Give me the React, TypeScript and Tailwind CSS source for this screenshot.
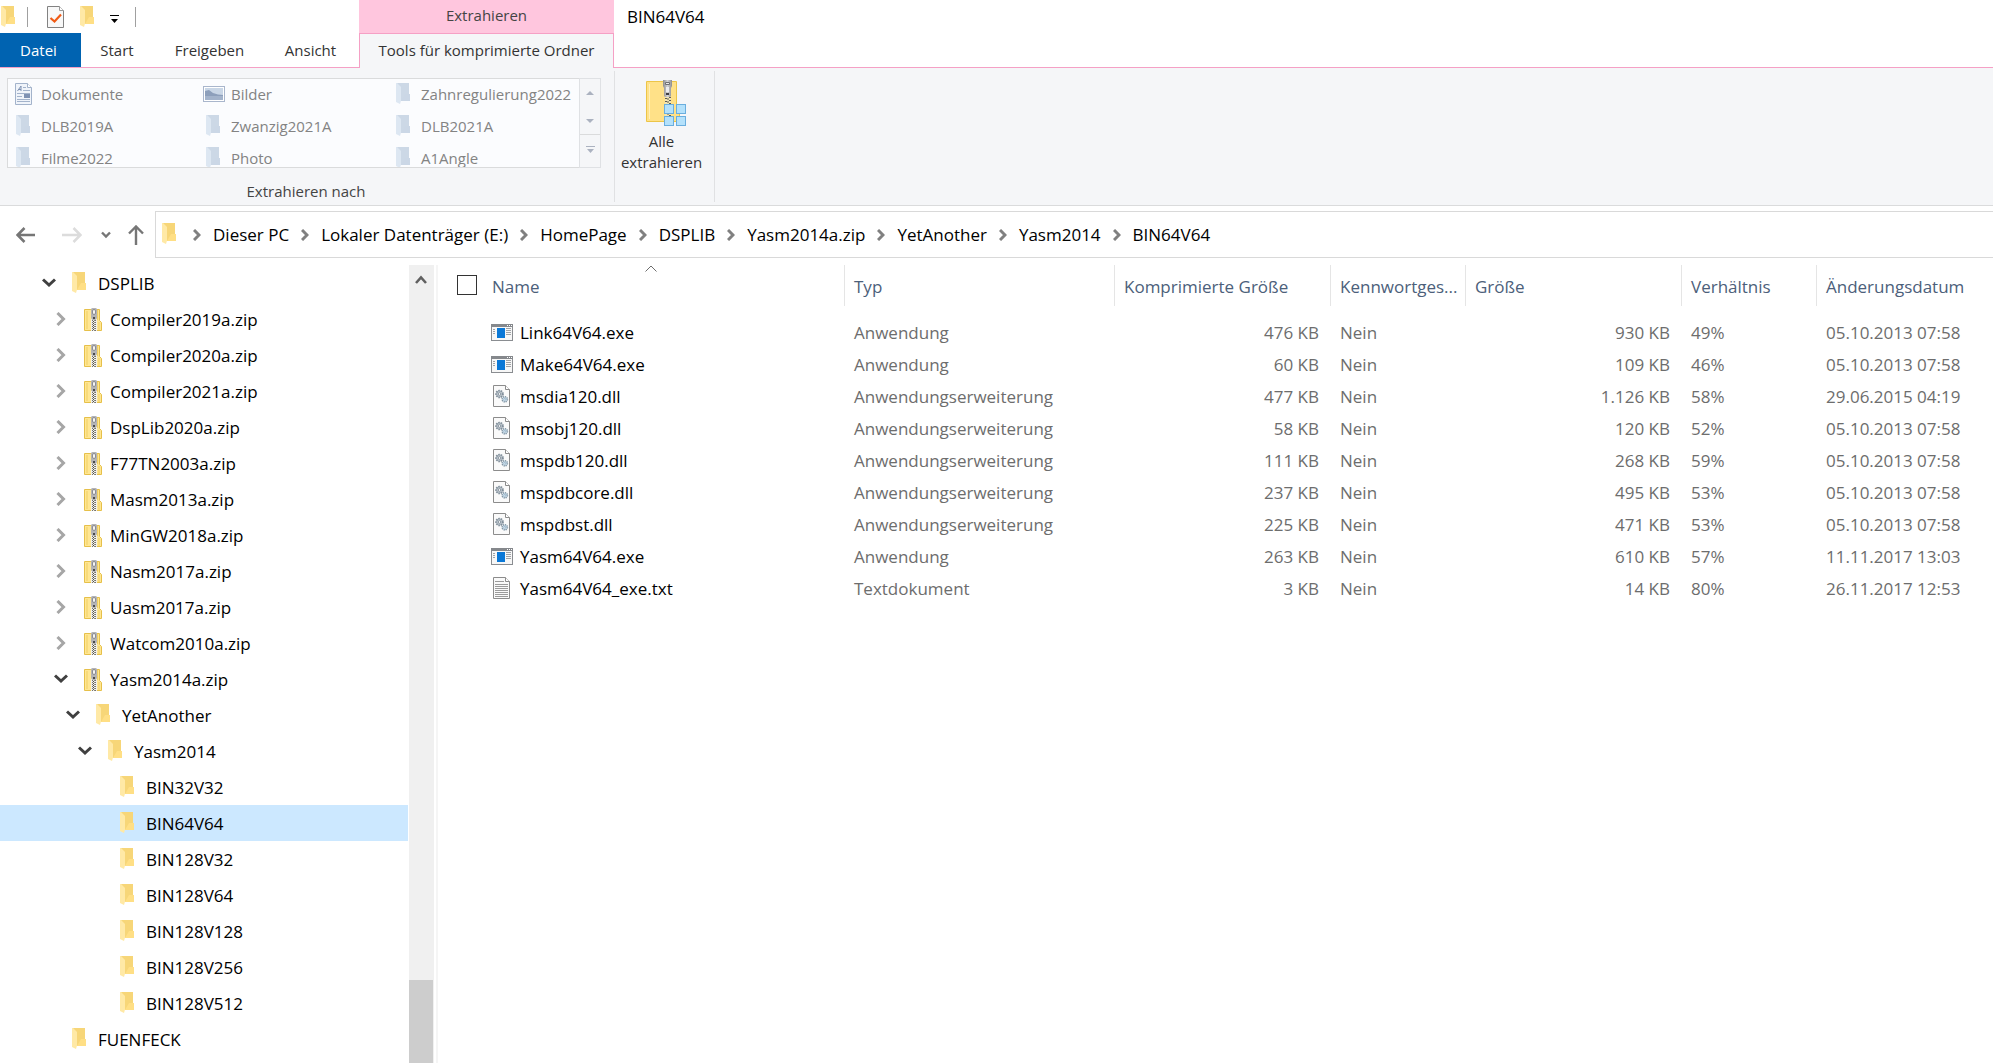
import React from "react";

type IconProps = { muted?: boolean };

function FolderIcon({ muted = false }: IconProps) {
  const back = muted ? "#ccd8e6" : "#f7d678";
  const foot = muted ? "#cbd7e6" : "#ffdf85";
  const flap = muted ? "#dde7f2" : "#ffe9a6";
  return (
    <svg width="15" height="22" viewBox="0 0 15 22" className="shrink-0" aria-hidden="true">
      <path d="M1 0h12v11h1v7H4z" fill={back} />
      <path d="M9 11h5v7H5z" fill={foot} />
      <path d="M0 0h1l4 4v13.500l-1 3.500L0 19z" fill={flap} />
    </svg>
  );
}

function ZipIcon() {
  return (
    <svg width="18" height="23" viewBox="0 0 18 23" className="shrink-0" aria-hidden="true">
      <path d="M0.500 1.500h15v11l2 2v8h-17z" fill="#ffe692" stroke="#e6c04a" />
      <path d="M3 3v18M13.500 2v10M15 14v8" stroke="#f1cf62" />
      <path d="M7 11h6v12H7z" fill="#efeee9" />
      <path d="M8.500 12v11M11.500 12v11" stroke="#77756d" strokeDasharray="1 1" />
      <path d="M9.500 13v10" stroke="#4f4e4a" strokeDasharray="1 1" />
      <path d="M10.500 12v11" stroke="#8a887f" strokeDasharray="1 1" />
      <path d="M8 0h4l1 1v9l-1.500 2h-3L7 10V1z" fill="#b4b4b6" />
      <rect x="8.500" y="1.500" width="3" height="5" rx="1.500" fill="#f4f4f4" stroke="#858588" strokeWidth="0.900" />
      <path d="M9 9h2v2H9z" fill="#4a4a4c" />
    </svg>
  );
}

function BigZipIcon() {
  return (
    <svg width="40" height="46" viewBox="0 0 40 46" aria-hidden="true">
      <defs>
        <linearGradient id="pull" x1="0" x2="1" y1="0" y2="0">
          <stop offset="0" stopColor="#8c8c8e" />
          <stop offset="0.500" stopColor="#d2d2d4" />
          <stop offset="1" stopColor="#8c8c8e" />
        </linearGradient>
      </defs>
      <path d="M0.500 1.500h30v24l3 2v14H0.500z" fill="#ffe188" stroke="#ecc548" />
      <path d="M3.500 4v35" stroke="#fff0b8" />
      <path d="M19 17h6v25h-6z" fill="#f3e6b4" />
      <path d="M20 18v24M24 17v25" stroke="#5d5b54" strokeWidth="2" strokeDasharray="1 2" />
      <path d="M22 17v25" stroke="#5d5b54" strokeWidth="2" strokeDasharray="1 2" strokeDashoffset="1.500" />
      <path d="M17 0h9v6l-1 2v8l-1 1h-5l-1-1V8l-1-2z" fill="url(#pull)" />
      <path d="M19.500 2.500h4v2h-4z" fill="#e8e8ea" stroke="#6f6f72" />
      <path d="M20 7h3v5h-3z" fill="#ececee" />
      <rect x="20" y="13" width="3" height="2" fill="#3f3f41" />
      <g fill="#b4e1fb" stroke="#6aaede">
        <rect x="18.500" y="24.500" width="9" height="9" />
        <rect x="30.500" y="24.500" width="9" height="9" />
        <rect x="18.500" y="36.500" width="9" height="9" />
        <rect x="30.500" y="36.500" width="9" height="9" />
      </g>
    </svg>
  );
}

function CheckedPageIcon() {
  return (
    <svg width="17" height="22" viewBox="0 0 17 22" aria-hidden="true">
      <path d="M0.500 0.500h12l4 4v17H0.500z" fill="#f8f8f8" stroke="#828282" />
      <path d="M12.500 0.500v4h4" fill="#fff" stroke="#9a9a9a" />
      <path d="M3.500 12l4 3.500L14 8.500" fill="none" stroke="#f05a14" strokeWidth="2.200" />
    </svg>
  );
}

function DocumentsIcon() {
  return (
    <svg width="17" height="22" viewBox="0 0 17 22" className="shrink-0" aria-hidden="true">
      <path d="M0.500 0.500h12l4 4v17H0.500z" fill="#f0f4fa" stroke="#a3b3cb" />
      <path d="M12.500 0.500v4h4" fill="#fff" stroke="#a3b3cb" />
      <path d="M2.500 8L6 3v5M3.500 6.500H6" fill="none" stroke="#7f92b3" />
      <path d="M8 4.500h3M8 7.500h7M2 10.500h13M2 13.500h5M2 16.500h13M2 18.500h13" stroke="#a3b3cb" />
      <rect x="9" y="11" width="6" height="4" fill="#7f92b3" />
    </svg>
  );
}

function PicturesIcon() {
  return (
    <svg width="22" height="16" viewBox="0 0 22 16" className="shrink-0" aria-hidden="true">
      <rect x="0.500" y="0.500" width="21" height="15" fill="#fff" stroke="#a9b6cc" />
      <rect x="2" y="2" width="18" height="12" fill="#c9d6e6" />
      <path d="M2 5l4-1 4 3 5 1.500 5 .5v1H2z" fill="#8d9fbb" />
      <path d="M2 10h18v4H2z" fill="#a3b3cb" />
    </svg>
  );
}

function ExeIcon() {
  return (
    <svg width="22" height="17" viewBox="0 0 22 17" className="shrink-0" aria-hidden="true">
      <rect x="0.500" y="0.500" width="21" height="16" fill="#f7f7f7" stroke="#8a8d91" />
      <path d="M0 0h22v3H0z" fill="#85888c" />
      <path d="M16 1.500h1M18 1.500h1M20 1.500h1" stroke="#fff" />
      <rect x="6" y="4" width="8" height="10" fill="#0a78d7" />
      <path d="M2 5.500h2M2 7.500h2M2 9.500h2M15 4.500h5M15 6.500h5M15 8.500h5M15 10.500h5" stroke="#a0a3a6" />
    </svg>
  );
}

function DllIcon() {
  return (
    <svg width="17" height="22" viewBox="0 0 17 22" className="shrink-0" aria-hidden="true">
      <path d="M0.500 0.500h12l4 4v17H0.500z" fill="#fafafa" stroke="#8c8c8c" />
      <path d="M12.500 0.500v4h4" fill="#fff" stroke="#8c8c8c" />
      <circle cx="6.500" cy="9" r="3.400" fill="#c0c8cf" stroke="#7f8d99" strokeWidth="1.900" strokeDasharray="1.500 0.900" />
      <circle cx="6.500" cy="9" r="1.300" fill="#fff" stroke="#7f8d99" strokeWidth="0.900" />
      <circle cx="11.800" cy="14.300" r="2.600" fill="#d0e2ee" stroke="#8296a5" strokeWidth="1.600" strokeDasharray="1.200 0.800" />
      <circle cx="11.800" cy="14.300" r="0.900" fill="#fff" stroke="#7fa3bd" strokeWidth="0.700" />
    </svg>
  );
}

function TextIcon() {
  return (
    <svg width="17" height="22" viewBox="0 0 17 22" className="shrink-0" aria-hidden="true">
      <path d="M0.500 0.500h12l4 4v17H0.500z" fill="#fafafa" stroke="#8c8c8c" />
      <path d="M12.500 0.500v4h4" fill="#fff" stroke="#8c8c8c" />
      <path d="M2 4.500h9M2 7.500h13M2 9.500h13M2 11.500h13M2 13.500h13M2 15.500h13M2 17.500h13M2 19.500h13" stroke="#9b9b9b" />
    </svg>
  );
}

function Chevron({ open }: { open: boolean }) {
  return open ? (
    <svg width="14" height="10" viewBox="0 0 14 10" aria-hidden="true">
      <path d="M1 1.500l6 5.500 6-5.500" fill="none" stroke="#404040" strokeWidth="3" />
    </svg>
  ) : (
    <svg width="10" height="14" viewBox="0 0 10 14" aria-hidden="true">
      <path d="M1.500 1l6 6-6 6" fill="none" stroke="#a6a6a6" strokeWidth="3" />
    </svg>
  );
}

type Node = { label: string; level: number; zip?: boolean; open?: boolean };

const tree: Node[] = [
  { label: "DSPLIB", level: 0, open: true },
  { label: "Compiler2019a.zip", level: 1, zip: true, open: false },
  { label: "Compiler2020a.zip", level: 1, zip: true, open: false },
  { label: "Compiler2021a.zip", level: 1, zip: true, open: false },
  { label: "DspLib2020a.zip", level: 1, zip: true, open: false },
  { label: "F77TN2003a.zip", level: 1, zip: true, open: false },
  { label: "Masm2013a.zip", level: 1, zip: true, open: false },
  { label: "MinGW2018a.zip", level: 1, zip: true, open: false },
  { label: "Nasm2017a.zip", level: 1, zip: true, open: false },
  { label: "Uasm2017a.zip", level: 1, zip: true, open: false },
  { label: "Watcom2010a.zip", level: 1, zip: true, open: false },
  { label: "Yasm2014a.zip", level: 1, zip: true, open: true },
  { label: "YetAnother", level: 2, open: true },
  { label: "Yasm2014", level: 3, open: true },
  { label: "BIN32V32", level: 4 },
  { label: "BIN64V64", level: 4 },
  { label: "BIN128V32", level: 4 },
  { label: "BIN128V64", level: 4 },
  { label: "BIN128V128", level: 4 },
  { label: "BIN128V256", level: 4 },
  { label: "BIN128V512", level: 4 },
  { label: "FUENFECK", level: 0 },
];

const indents = ["pl-[39px]", "pl-[51px]", "pl-[63px]", "pl-[75px]", "pl-[87px]"];

const files = [
  ["Link64V64.exe", "Anwendung", "476 KB", "930 KB", "49%", "05.10.2013 07:58"],
  ["Make64V64.exe", "Anwendung", "60 KB", "109 KB", "46%", "05.10.2013 07:58"],
  ["msdia120.dll", "Anwendungserweiterung", "477 KB", "1.126 KB", "58%", "29.06.2015 04:19"],
  ["msobj120.dll", "Anwendungserweiterung", "58 KB", "120 KB", "52%", "05.10.2013 07:58"],
  ["mspdb120.dll", "Anwendungserweiterung", "111 KB", "268 KB", "59%", "05.10.2013 07:58"],
  ["mspdbcore.dll", "Anwendungserweiterung", "237 KB", "495 KB", "53%", "05.10.2013 07:58"],
  ["mspdbst.dll", "Anwendungserweiterung", "225 KB", "471 KB", "53%", "05.10.2013 07:58"],
  ["Yasm64V64.exe", "Anwendung", "263 KB", "610 KB", "57%", "11.11.2017 13:03"],
  ["Yasm64V64_exe.txt", "Textdokument", "3 KB", "14 KB", "80%", "26.11.2017 12:53"],
];

const crumbs = [
  "Dieser PC",
  "Lokaler Datenträger (E:)",
  "HomePage",
  "DSPLIB",
  "Yasm2014a.zip",
  "YetAnother",
  "Yasm2014",
  "BIN64V64",
];

const targets = [
  "Dokumente",
  "Bilder",
  "Zahnregulierung2022",
  "DLB2019A",
  "Zwanzig2021A",
  "DLB2021A",
  "Filme2022",
  "Photo",
  "A1Angle",
];

const headings = ["Typ", "Komprimierte Größe", "Kennwortges...", "Größe", "Verhältnis", "Änderungsdatum"];

function fileIcon(name: string) {
  if (name.endsWith(".exe")) return <ExeIcon />;
  if (name.endsWith(".dll")) return <DllIcon />;
  return <TextIcon />;
}

function targetIcon(name: string) {
  if (name === "Dokumente") return <DocumentsIcon />;
  if (name === "Bilder") return <PicturesIcon />;
  return <FolderIcon muted />;
}

function TopBar() {
  return (
    <header className="flex text-[15px] text-[#333]">
      <div className="w-[359px] shrink-0">
        <div className="flex h-[33px] items-center pl-px">
          <FolderIcon />
          <span className="ml-[11px] h-5 w-px bg-[#a0a0a0]" />
          <button type="button" aria-label="Eigenschaften" className="ml-[19px]">
            <CheckedPageIcon />
          </button>
          <button type="button" aria-label="Neuer Ordner" className="ml-4">
            <FolderIcon />
          </button>
          <button type="button" aria-label="Symbolleiste anpassen" className="ml-[15px] pt-1">
            <svg width="9" height="8" viewBox="0 0 9 8" aria-hidden="true">
              <path d="M0 .5h9" stroke="#000" />
              <path d="M1 4h7L4.500 8z" fill="#000" />
            </svg>
          </button>
          <span className="ml-4 h-5 w-px bg-[#a0a0a0]" />
        </div>
        <nav className="flex h-[35px] border-b border-[#f5a0c5]">
          <button type="button" className="w-[81px] bg-[#0063b1] pr-1 text-white">Datei</button>
          <button type="button" className="w-[72px]">Start</button>
          <button type="button" className="w-[113px]">Freigeben</button>
          <button type="button" className="w-[89px]">Ansicht</button>
        </nav>
      </div>
      <div className="flex w-[255px] shrink-0 flex-col">
        <div className="flex h-[33px] items-center justify-center bg-[#ffc6de] pb-[3px] text-[#444]">Extrahieren</div>
        <button type="button" className="h-[35px] whitespace-nowrap border-x border-t border-[#f5a0c5] bg-[#f5f6f8] pb-0.5">
          Tools für komprimierte Ordner
        </button>
      </div>
      <div className="min-w-0 flex-1 border-b border-[#f5a0c5] pl-[13px]">
        <h1 className="flex h-[33px] items-center text-[17px] text-black">BIN64V64</h1>
      </div>
    </header>
  );
}

function Ribbon() {
  return (
    <section className="flex h-[138px] border-b border-[#dadbdc] bg-[#f5f6f8] text-[15px] text-[#333]">
      <div className="flex w-[614px] shrink-0 flex-col items-center pl-[7px] pr-[13px] pt-[10px]">
        <div className="flex h-[90px] w-full">
          <div className="grid flex-1 auto-rows-[32px] grid-cols-[190px_190px_1fr] overflow-hidden border-y border-l border-[#dadbdc] bg-[#fbfcfe]">
            {targets.map((t) => (
              <button key={t} type="button" disabled className="flex items-center whitespace-nowrap pb-0.5 pl-1 text-[#838383]">
                <span className="mr-[6px] flex w-[23px] justify-center">{targetIcon(t)}</span>
                {t}
              </button>
            ))}
          </div>
          <div className="flex w-[22px] flex-col border border-[#dfe1e4] text-[#abb2c0]">
            <button type="button" disabled aria-label="Nach oben" className="flex flex-1 items-center justify-center">
              <svg width="8" height="4" viewBox="0 0 8 4"><path d="M0 4h8L4 0z" fill="currentColor" /></svg>
            </button>
            <button type="button" disabled aria-label="Nach unten" className="flex flex-1 items-center justify-center">
              <svg width="8" height="4" viewBox="0 0 8 4"><path d="M0 0h8L4 4z" fill="currentColor" /></svg>
            </button>
            <button type="button" disabled aria-label="Mehr" className="flex flex-1 items-center justify-center border-t border-[#dadbdc] pb-1">
              <svg width="9" height="7" viewBox="0 0 9 7"><path d="M0 0h9v1H0zM1 3h7L4.500 7z" fill="currentColor" /></svg>
            </button>
          </div>
        </div>
        <div className="ml-1 mt-[11px] text-[#444]">Extrahieren nach</div>
      </div>
      <div className="my-[3px] w-[101px] shrink-0 border-x border-[#e0e1e3]">
        <button type="button" className="flex w-full flex-col items-center pr-[6px] pt-[9px] leading-[21px]">
          <span className="mb-[5px] ml-2"><BigZipIcon /></span>
          Alle
          <br />
          extrahieren
        </button>
      </div>
    </section>
  );
}

function AddressRow() {
  return (
    <div className="flex items-center pb-[7px] pl-4 pt-[5px]">
      <button type="button" aria-label="Zurück">
        <svg width="20" height="16" viewBox="0 0 20 16"><path d="M19 8H2M8.500 1L1.500 8l7 7" fill="none" stroke="#767676" strokeWidth="2.600" /></svg>
      </button>
      <button type="button" aria-label="Vorwärts" className="ml-[26px]">
        <svg width="20" height="16" viewBox="0 0 20 16"><path d="M0 8h18M11.500 1l7 7-7 7" fill="none" stroke="#dcdcdc" strokeWidth="2.600" /></svg>
      </button>
      <button type="button" aria-label="Zuletzt besucht" className="ml-[19px]">
        <svg width="10" height="8" viewBox="0 0 10 8"><path d="M1 1.500l4 4 4-4" fill="none" stroke="#767676" strokeWidth="2.400" /></svg>
      </button>
      <button type="button" aria-label="Nach oben" className="ml-[17px]">
        <svg width="16" height="20" viewBox="0 0 16 20"><path d="M8 20V2M1 8.500l7-7 7 7" fill="none" stroke="#767676" strokeWidth="2.400" /></svg>
      </button>
      <nav aria-label="Pfad" className="ml-[11px] flex h-[47px] min-w-0 flex-1 items-center border-y border-l border-[#d9d9d9] pl-[6px]">
        <span className="mr-1 pb-0.5"><FolderIcon /></span>
        {crumbs.map((c) => (
          <React.Fragment key={c}>
            <span className="mx-3 shrink-0">
              <svg width="8" height="12" viewBox="0 0 8 12"><path d="M1 1l5 5-5 5" fill="none" stroke="#808080" strokeWidth="3" /></svg>
            </span>
            <a href="#" className="whitespace-nowrap">{c}</a>
          </React.Fragment>
        ))}
      </nav>
    </div>
  );
}

function Sidebar() {
  return (
    <aside className="flex w-[438px] shrink-0 border-r-2 border-[#f5f5f5]">
      <ul className="w-[408px]">
        {tree.map((n) => (
          <li
            key={n.label}
            className={`flex h-9 items-center ${indents[n.level]} ${n.label === "BIN64V64" ? "bg-[#cce8ff]" : ""}`}
          >
            {n.open === undefined ? (
              <span className="w-[20px]" />
            ) : (
              <button type="button" aria-label={`${n.label} ${n.open ? "zuklappen" : "aufklappen"}`} className="flex w-[20px] justify-center">
                <Chevron open={n.open} />
              </button>
            )}
            <span className="ml-[13px] flex w-[26px]">{n.zip ? <ZipIcon /> : <FolderIcon />}</span>
            <a href="#" className="pt-0.5">{n.label}</a>
          </li>
        ))}
      </ul>
      <div className="ml-px flex w-[25px] flex-col items-start bg-[#f0f0f0] pt-[10px]">
        <svg width="12" height="10" viewBox="0 0 12 10" className="ml-[6px]"><path d="M1 8l5-5.500L11 8" fill="none" stroke="#606060" strokeWidth="2.600" /></svg>
        <span className="flex-1" />
        <span className="h-[83px] w-6 bg-[#cdcdcd]" />
      </div>
    </aside>
  );
}

function FileTable() {
  return (
    <main className="min-w-0 flex-1">
      <table className="w-full table-fixed border-collapse text-left text-[#6d6d6d]">
        <colgroup>
          <col className="w-[407px]" />
          <col className="w-[270px]" />
          <col className="w-[216px]" />
          <col className="w-[135px]" />
          <col className="w-[216px]" />
          <col className="w-[135px]" />
          <col />
        </colgroup>
        <thead className="text-[#4c607a]">
          <tr>
            <th className="p-0 pb-[11px] font-normal">
              <div className="relative flex h-[41px] items-center border-r border-[#e5e5e5] pl-[19px] pt-0.5">
                <input
                  type="checkbox"
                  aria-label="Alle auswählen"
                  className="mb-1 mr-[15px] size-[20px] appearance-none border border-[#333] bg-white"
                />
                Name
                <svg width="12" height="7" viewBox="0 0 12 7" className="absolute left-[207px] top-0" aria-hidden="true">
                  <path d="M.5 6.500L6 1l5.500 5.500" fill="none" stroke="#6d6d6d" />
                </svg>
              </div>
            </th>
            {headings.map((h, i) => (
              <th key={h} className="p-0 pb-[11px] font-normal">
                <div className={`flex h-[41px] items-center whitespace-nowrap pl-[9px] pt-0.5 ${i < 5 ? "border-r border-[#e5e5e5]" : ""}`}>
                  {h}
                </div>
              </th>
            ))}
          </tr>
        </thead>
        <tbody>
          {files.map(([name, type, packed, size, ratio, date]) => (
            <tr key={name} className="h-8">
              <td className="p-0 text-black">
                <span className="flex items-center pl-[52px]">
                  <span className="mr-[7px] flex w-[23px] justify-center pb-0.5">{fileIcon(name)}</span>
                  {name}
                </span>
              </td>
              <td className="p-0 pl-[9px]">{type}</td>
              <td className="p-0 pr-3 text-right">{packed}</td>
              <td className="p-0 pl-[9px]">Nein</td>
              <td className="p-0 pr-3 text-right">{size}</td>
              <td className="p-0 pl-[9px]">{ratio}</td>
              <td className="whitespace-nowrap p-0 pl-[9px]">{date}</td>
            </tr>
          ))}
        </tbody>
      </table>
    </main>
  );
}

export default function App() {
  return (
    <div className="flex min-h-screen flex-col overflow-hidden bg-white font-['Open_Sans',sans-serif] text-[17px] leading-6 text-black">
      <TopBar />
      <Ribbon />
      <AddressRow />
      <div className="flex flex-1">
        <Sidebar />
        <FileTable />
      </div>
    </div>
  );
}
